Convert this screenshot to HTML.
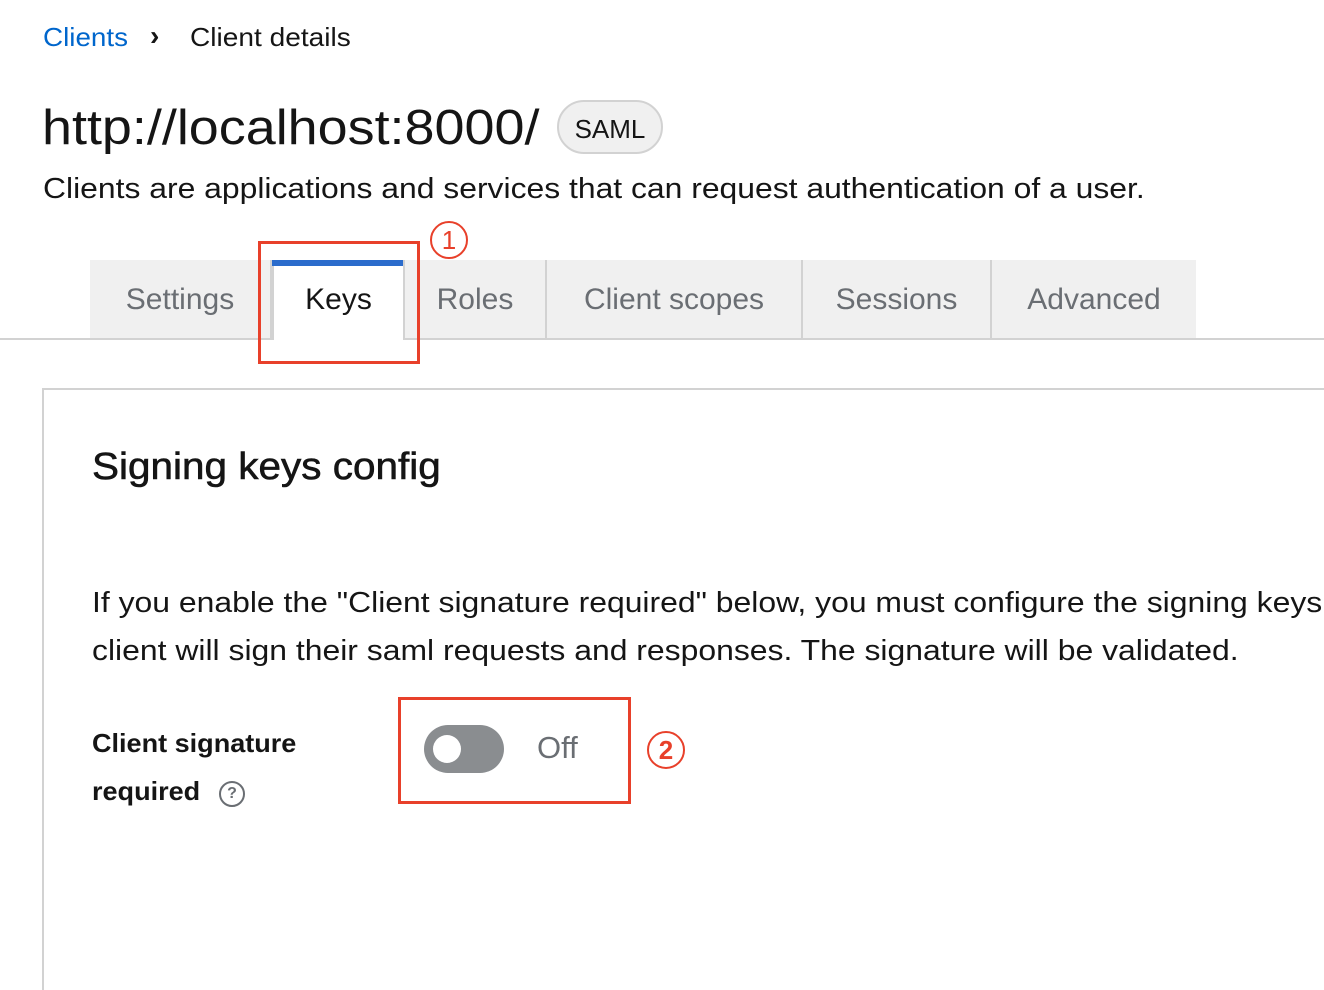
<!DOCTYPE html>
<html style="overflow:hidden;height:990px"><head><meta charset="utf-8"><style>
body{margin:0;width:1324px;height:990px;overflow:hidden;background:#fff;font-family:"Liberation Sans","Noto Sans CJK JP",sans-serif;color:#151515;position:relative}
.a{position:absolute;white-space:nowrap;transform-origin:0 0}
.tab{position:absolute;top:260px;height:78px;background:#f0f0f0;color:#6a6e73;font-size:30px;line-height:80px;text-align:center;border-right:2px solid #d2d2d2;box-sizing:border-box}
.red{position:absolute;border:3px solid #e8402a;box-sizing:border-box}
</style></head><body>
<div class="a" style="left:43px;top:22px;font-size:26px;color:#0066cc;transform:scaleX(1.07)">Clients</div>
<div class="a" style="left:150px;top:20px;font-size:28px;font-weight:bold">›</div>
<div class="a" style="left:190px;top:22px;font-size:26px;transform:scaleX(1.08)">Client details</div>
<div class="a" style="left:42px;top:100px;font-size:49px;transform:scaleX(1.1)">http://localhost:8000/</div>
<div class="a" style="left:557px;top:100px;width:106px;height:54px;border:2px solid #d2d2d2;border-radius:28px;background:#f0f0f0;font-size:26px;line-height:54px;text-align:center;box-sizing:border-box">SAML</div>
<div class="a" style="left:43px;top:173px;font-size:28.5px;transform:scaleX(1.118)">Clients are applications and services that can request authentication of a user.</div>
<div class="a" style="left:0;top:338px;width:1324px;height:2px;background:#d2d2d2"></div>
<div class="tab" style="left:90px;width:182px">Settings</div>
<div class="tab" style="left:272px;width:133px;background:#fff;color:#151515;border-left:2px solid #d2d2d2;height:80px">Keys</div>
<div class="a" style="left:272px;top:260px;width:131px;height:6px;background:#2b6ccc"></div>
<div class="tab" style="left:405px;width:142px">Roles</div>
<div class="tab" style="left:547px;width:256px">Client scopes</div>
<div class="tab" style="left:803px;width:189px">Sessions</div>
<div class="tab" style="left:992px;width:204px;border-right:none">Advanced</div>
<div class="red" style="left:258px;top:241px;width:162px;height:123px"></div>
<div class="a" style="left:430px;top:221px;width:34px;height:34px;border:2px solid #e8402a;border-radius:50%;color:#e8402a;font-size:26px;line-height:34px;text-align:center">1</div>
<div class="a" style="left:42px;top:388px;width:1282px;height:602px;border:2px solid #d2d2d2;border-right:none;border-bottom:none;box-sizing:border-box"></div>
<div class="a" style="left:92px;top:446px;font-size:38px;transform:scaleX(1.065);-webkit-text-stroke:0.6px #151515">Signing keys config</div>
<div class="a" style="left:92px;top:579px;font-size:29px;line-height:48px;transform:scaleX(1.1)">If you enable the "Client signature required" below, you must configure the signing keys<br>client will sign their saml requests and responses. The signature will be validated.</div>
<div class="a" style="left:92px;top:719px;font-size:26px;font-weight:bold;line-height:48px;transform:scaleX(1.04)">Client signature<br>required</div>
<div class="a" style="left:219px;top:781px;width:22px;height:22px;border:2.5px solid #6a6e73;border-radius:50%;color:#6a6e73;font-size:16px;font-weight:bold;line-height:22px;text-align:center">?</div>
<div class="a" style="left:424px;top:725px;width:80px;height:48px;border-radius:24px;background:#8a8d90"></div>
<div class="a" style="left:433px;top:735px;width:28px;height:28px;border-radius:50%;background:#fff"></div>
<div class="a" style="left:537px;top:730px;font-size:31px;color:#6a6e73">Off</div>
<div class="red" style="left:398px;top:697px;width:233px;height:107px"></div>
<div class="a" style="left:647px;top:731px;width:34px;height:34px;border:2px solid #e8402a;border-radius:50%;color:#e8402a;font-size:26px;font-weight:bold;line-height:34px;text-align:center">2</div>
</body></html>
